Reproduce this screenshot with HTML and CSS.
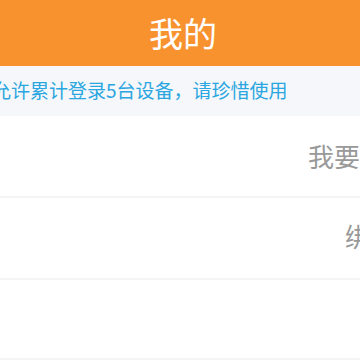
FILE: index.html
```html
<!DOCTYPE html>
<html lang="zh-CN">
<head>
  <meta charset="UTF-8" />
  <meta name="viewport" content="width=device-width, initial-scale=1.0"/>
  <title>我的</title>
  <link rel="stylesheet" href="styles.css">
</head>
<body>

  <div class="header">
    <div class="header-title">我的</div>
  </div>

  <div class="notice">
    <span class="notice-text">允许累计登录5台设备，请珍惜使用</span>
  </div>

  <div class="list">
    <div class="row row-feedback">
      <span class="row-value">我要反馈</span>
    </div>
    <div class="row row-bind">
      <span class="row-value">绑定手机</span>
    </div>
    <div class="row"></div>
  </div>

</body>
</html>
```

FILE: styles.css
```css
html, body {
  margin: 0;
  padding: 0;
}

body {
  background: #fff;
  font-family: "Noto Sans CJK SC", "Noto Sans", sans-serif;
  overflow: hidden;
  width: 360px;
}

.header {
  background: #f8922f;
  height: 66px;
  display: flex;
  justify-content: center;
  align-items: center;
  padding-left: 6px;
}

.header-title {
  color: #fff;
  font-size: 34px;
  line-height: 1;
}

.notice {
  background: #f5f7fa;
  height: 50px;
  display: flex;
  align-items: center;
  overflow: hidden;
  white-space: nowrap;
}

.notice-text {
  color: #2aa6e0;
  font-size: 19px;
  margin-left: -8px;
  margin-top: -4px;
}

.row {
  height: 80px;
  background: #fff;
  border-bottom: 2px solid #f4f4f4;
  display: flex;
  align-items: center;
  justify-content: flex-end;
  white-space: nowrap;
}

.row-value {
  color: #999;
  font-size: 26px;
  line-height: 1;
}

/* rows run on past the right edge of the screen */
.row-feedback .row-value {
  margin-right: -52px;
}

.row-bind .row-value {
  margin-right: -89px;
  margin-top: -4px;
}

.row:last-child {
  height: 78px;
}
```
